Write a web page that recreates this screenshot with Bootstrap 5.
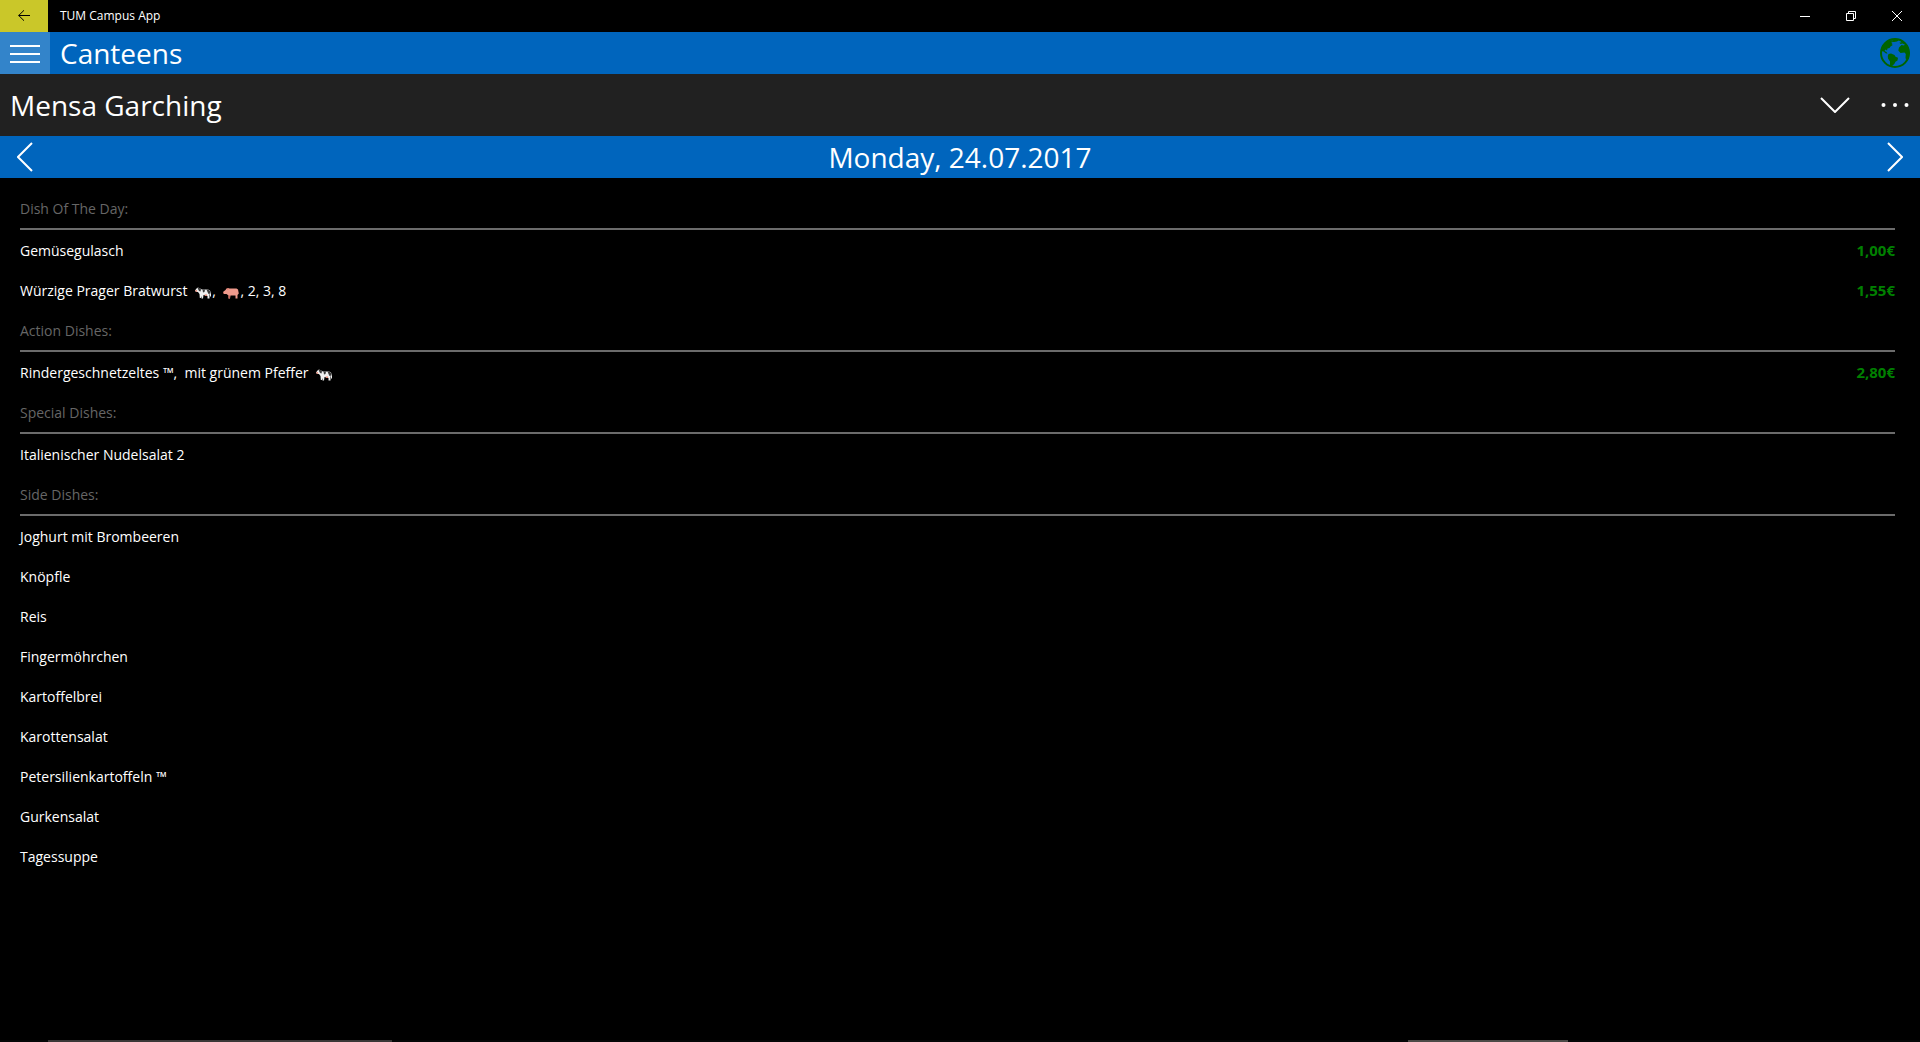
<!DOCTYPE html>
<html lang="en" data-bs-theme="dark">
<head>
<meta charset="utf-8">
<meta name="viewport" content="width=device-width, initial-scale=1">
<title>TUM Campus App</title>
<link href="https://cdn.jsdelivr.net/npm/bootstrap@5.3.0/dist/css/bootstrap.min.css" rel="stylesheet">
<style>
  body { background: #000; color: #fff; font-family: "Open Sans", "Noto Sans", sans-serif; font-size: 14px; line-height: 20px; }
  svg { display: block; fill: none; stroke: currentColor; }
  .bare-btn { background: none; border: 0; padding: 0; color: #fff; display: flex; align-items: center; justify-content: center; align-self: stretch; }
  .title-bar { height: 32px; font-size: 12px; }
  .title-bar span { margin-left: 12px; }
  .back-btn { background: #cac729; color: #000; width: 48px; }
  .window-btn { width: 46px; }
  .page-bar { height: 42px; background: #0065bd; }
  .menu-btn { background: #3384ca; width: 50px; }
  .menu-btn.lined { padding-top: 2px; }
  .page-title { font-size: 28px; line-height: 36px; font-weight: 400; margin: 0; }
  .page-bar .after-menu { margin-left: 10px; }
  .canteen-bar { min-height: 62px; background: #212121; padding-left: 10px; }
  .chevron-btn { width: 50px; }
  .more-btn { width: 50px; margin-left: 10px; }
  .menu-list { padding: 10px 25px 0 20px; }
  .dish-group { height: 42px; padding-top: 2px; border-bottom: 2px solid #6b6b6b; color: #666; font-size: 14px; line-height: 20px; font-weight: 400; margin: 0; }
  .dish-row { height: 40px; padding-top: 2px; }
  .dish-price { color: #008000; font-size: 15px; font-weight: 700; padding-bottom: 2px; }
  .animal { display: inline-block; width: 16px; height: 12px; stroke: none; vertical-align: -3px; margin: 0 1px 0 4px; }
  .task-strip { height: 2px; background: #050607; }
  .task-strip div { height: 2px; }
  .task-a { width: 344px; margin-left: 48px; background: #3a3737; }
  .task-b { width: 160px; margin-right: 352px; background: #4c4a47; }
</style>
<script src="https://cdn.jsdelivr.net/npm/bootstrap@5.3.0/dist/js/bootstrap.bundle.min.js"></script>
</head>
<body class="d-flex flex-column min-vh-100">

<svg width="0" height="0" class="position-absolute" aria-hidden="true">
  <symbol id="cow" viewBox="0 0 16 12">
    <path fill="#f0f0f0" d="M0 3.500 1.500 1.500 3 .5 5 1.500 7 2.500h6l2 1 1 3v3h-1V6.500L14.500 8v3.500H12.500V9L11 8.500 8.500 8l-.5 3.500H6.500V9l-.7 2H4.800L4.500 7 3 5 1 5z"/>
    <path fill="#3c3c3c" d="M2.500.5 5 1.200 6 2.500 5.500 4.500 4 4 3 2zM7.500 2.500H10L9.500 5 8 5.500zM11.500 2.500H13.500L15 4l.5 2.500L13.500 7l-1-2z"/>
    <path fill="#e58a78" d="M0 3.200 1.500 3 2.500 4.500 1 5zM9.500 7.500h2.500V9H10z"/>
  </symbol>
  <symbol id="pig" viewBox="0 0 16 12">
    <path fill="#ee9a8c" d="M0 5 2.500 3 3.500 1.500 5 1 6.500 1.500h7l1.500 1 .8 4-1.300 1.500v3.500H12.500V8.500H7.500L7 11.500H5.500V8.500L3.500 7 1 7z"/>
    <path fill="#c9695d" d="M3.800 1.200 5.500 1 5 3zM5.500 8.500H7V11.500H5.500zM0 5h1v2L.5 6.500z"/>
  </symbol>
</svg>

<header>
  <div class="title-bar d-flex align-items-center">
    <button class="bare-btn back-btn" type="button" aria-label="Back">
      <svg width="12" height="12" viewBox="0 0 12 12"><path d="M.5 5.500H12M6 .3.700 5.500 6 10.700"/></svg>
    </button>
    <span class="me-auto">TUM Campus App</span>
    <button class="bare-btn window-btn" type="button" aria-label="Minimize">
      <svg width="10" height="10" viewBox="0 0 10 10"><path d="M0 5.500h10"/></svg>
    </button>
    <button class="bare-btn window-btn" type="button" aria-label="Restore">
      <svg width="10" height="10" viewBox="0 0 10 10"><path d="M.5 2.500h7v7h-7zM2.500 2.500v-2h7v7h-2"/></svg>
    </button>
    <button class="bare-btn window-btn" type="button" aria-label="Close">
      <svg width="10" height="10" viewBox="0 0 10 10"><path d="M0 0 10 10M10 0 0 10"/></svg>
    </button>
  </div>

  <div class="page-bar d-flex align-items-center">
    <button class="bare-btn menu-btn lined" type="button" aria-label="Menu">
      <svg width="30" height="18" viewBox="0 0 30 18" stroke-width="2"><path d="M0 1h30M0 9h30M0 17h30"/></svg>
    </button>
    <h1 class="page-title after-menu me-auto">Canteens</h1>
    <button class="bare-btn menu-btn bg-transparent" type="button" aria-label="Web">
      <svg width="30" height="30" viewBox="0 0 30 30" color="#006400">
        <circle cx="15" cy="15" r="14" stroke-width="2"/>
        <path fill="currentColor" stroke="none" d="M2 11 3.500 6.500 8 2.500 12.500 2.500 11 4 12.500 5 11.500 6 12.800 7 10.500 8.500 9.500 10 7.500 10.500 7 12.500 5.500 11.500 4.500 13 6.500 14 7.500 15.500 6 15.500 3.500 13.500 1.500 13z"/>
        <path fill="currentColor" stroke="none" d="M8.500 16 11 15.500 14.500 17 15.500 18.800 18 19.800 17.500 22.500 15.500 23.800 14.300 26 12.500 27.500 12 29 10 28.500 10 23.500 8 20.500 7.800 18zM19 9.500 21.500 7 24 7.500 25 6.500 22.500 5.500 20.500 6 19.500 4.500 21.500 4.500 20.500 2.500 25 5 28.500 10 29.500 15 28 20.500 26 22 25.500 19.500 25.800 16 24.500 14.500 20.500 15 18.300 12.500zM9 3.500 15 1.500 19 2 17 3.500 14 4z"/>
      </svg>
    </button>
  </div>

  <div class="canteen-bar d-flex align-items-center">
    <h2 class="page-title me-auto">Mensa Garching</h2>
    <button class="bare-btn chevron-btn" type="button" aria-label="Choose canteen">
      <svg width="30" height="16" viewBox="0 0 30 16" stroke-width="2"><path d="M1 1 15 15 29 1"/></svg>
    </button>
    <button class="bare-btn more-btn" type="button" aria-label="More">
      <svg width="28" height="4" viewBox="0 0 28 4"><g fill="currentColor" stroke="none"><circle cx="2.500" cy="2" r="2"/><circle cx="14" cy="2" r="2"/><circle cx="25.500" cy="2" r="2"/></g></svg>
    </button>
  </div>

  <div class="page-bar d-flex align-items-center justify-content-between">
    <button class="bare-btn chevron-btn" type="button" aria-label="Previous day">
      <svg width="16" height="30" viewBox="0 0 16 30" stroke-width="2"><path d="M15 1 1 15 15 29"/></svg>
    </button>
    <h2 class="page-title">Monday, 24.07.2017</h2>
    <button class="bare-btn chevron-btn" type="button" aria-label="Next day">
      <svg width="16" height="30" viewBox="0 0 16 30" stroke-width="2"><path d="M1 1 15 15 1 29"/></svg>
    </button>
  </div>
</header>

<main class="menu-list">
  <section>
    <h3 class="dish-group d-flex align-items-center">Dish Of The Day:</h3>
    <div class="dish-row d-flex align-items-center justify-content-between"><span>Gemüsegulasch</span><span class="dish-price">1,00€</span></div>
    <div class="dish-row d-flex align-items-center justify-content-between"><span>Würzige Prager Bratwurst <svg class="animal" role="img" aria-label="beef"><use href="#cow"/></svg>, <svg class="animal" role="img" aria-label="pork"><use href="#pig"/></svg>, 2, 3, 8</span><span class="dish-price">1,55€</span></div>
  </section>
  <section>
    <h3 class="dish-group d-flex align-items-center">Action Dishes:</h3>
    <div class="dish-row d-flex align-items-center justify-content-between"><span>Rindergeschnetzeltes ™,&nbsp; mit grünem Pfeffer <svg class="animal" role="img" aria-label="beef"><use href="#cow"/></svg></span><span class="dish-price">2,80€</span></div>
  </section>
  <section>
    <h3 class="dish-group d-flex align-items-center">Special Dishes:</h3>
    <div class="dish-row d-flex align-items-center">Italienischer Nudelsalat 2</div>
  </section>
  <section>
    <h3 class="dish-group d-flex align-items-center">Side Dishes:</h3>
    <div class="dish-row d-flex align-items-center">Joghurt mit Brombeeren</div>
    <div class="dish-row d-flex align-items-center">Knöpfle</div>
    <div class="dish-row d-flex align-items-center">Reis</div>
    <div class="dish-row d-flex align-items-center">Fingermöhrchen</div>
    <div class="dish-row d-flex align-items-center">Kartoffelbrei</div>
    <div class="dish-row d-flex align-items-center">Karottensalat</div>
    <div class="dish-row d-flex align-items-center">Petersilienkartoffeln ™</div>
    <div class="dish-row d-flex align-items-center">Gurkensalat</div>
    <div class="dish-row d-flex align-items-center">Tagessuppe</div>
  </section>
</main>

<footer class="task-strip d-flex justify-content-between mt-auto">
  <div class="task-a"></div>
  <div class="task-b"></div>
</footer>
</body>
</html>
